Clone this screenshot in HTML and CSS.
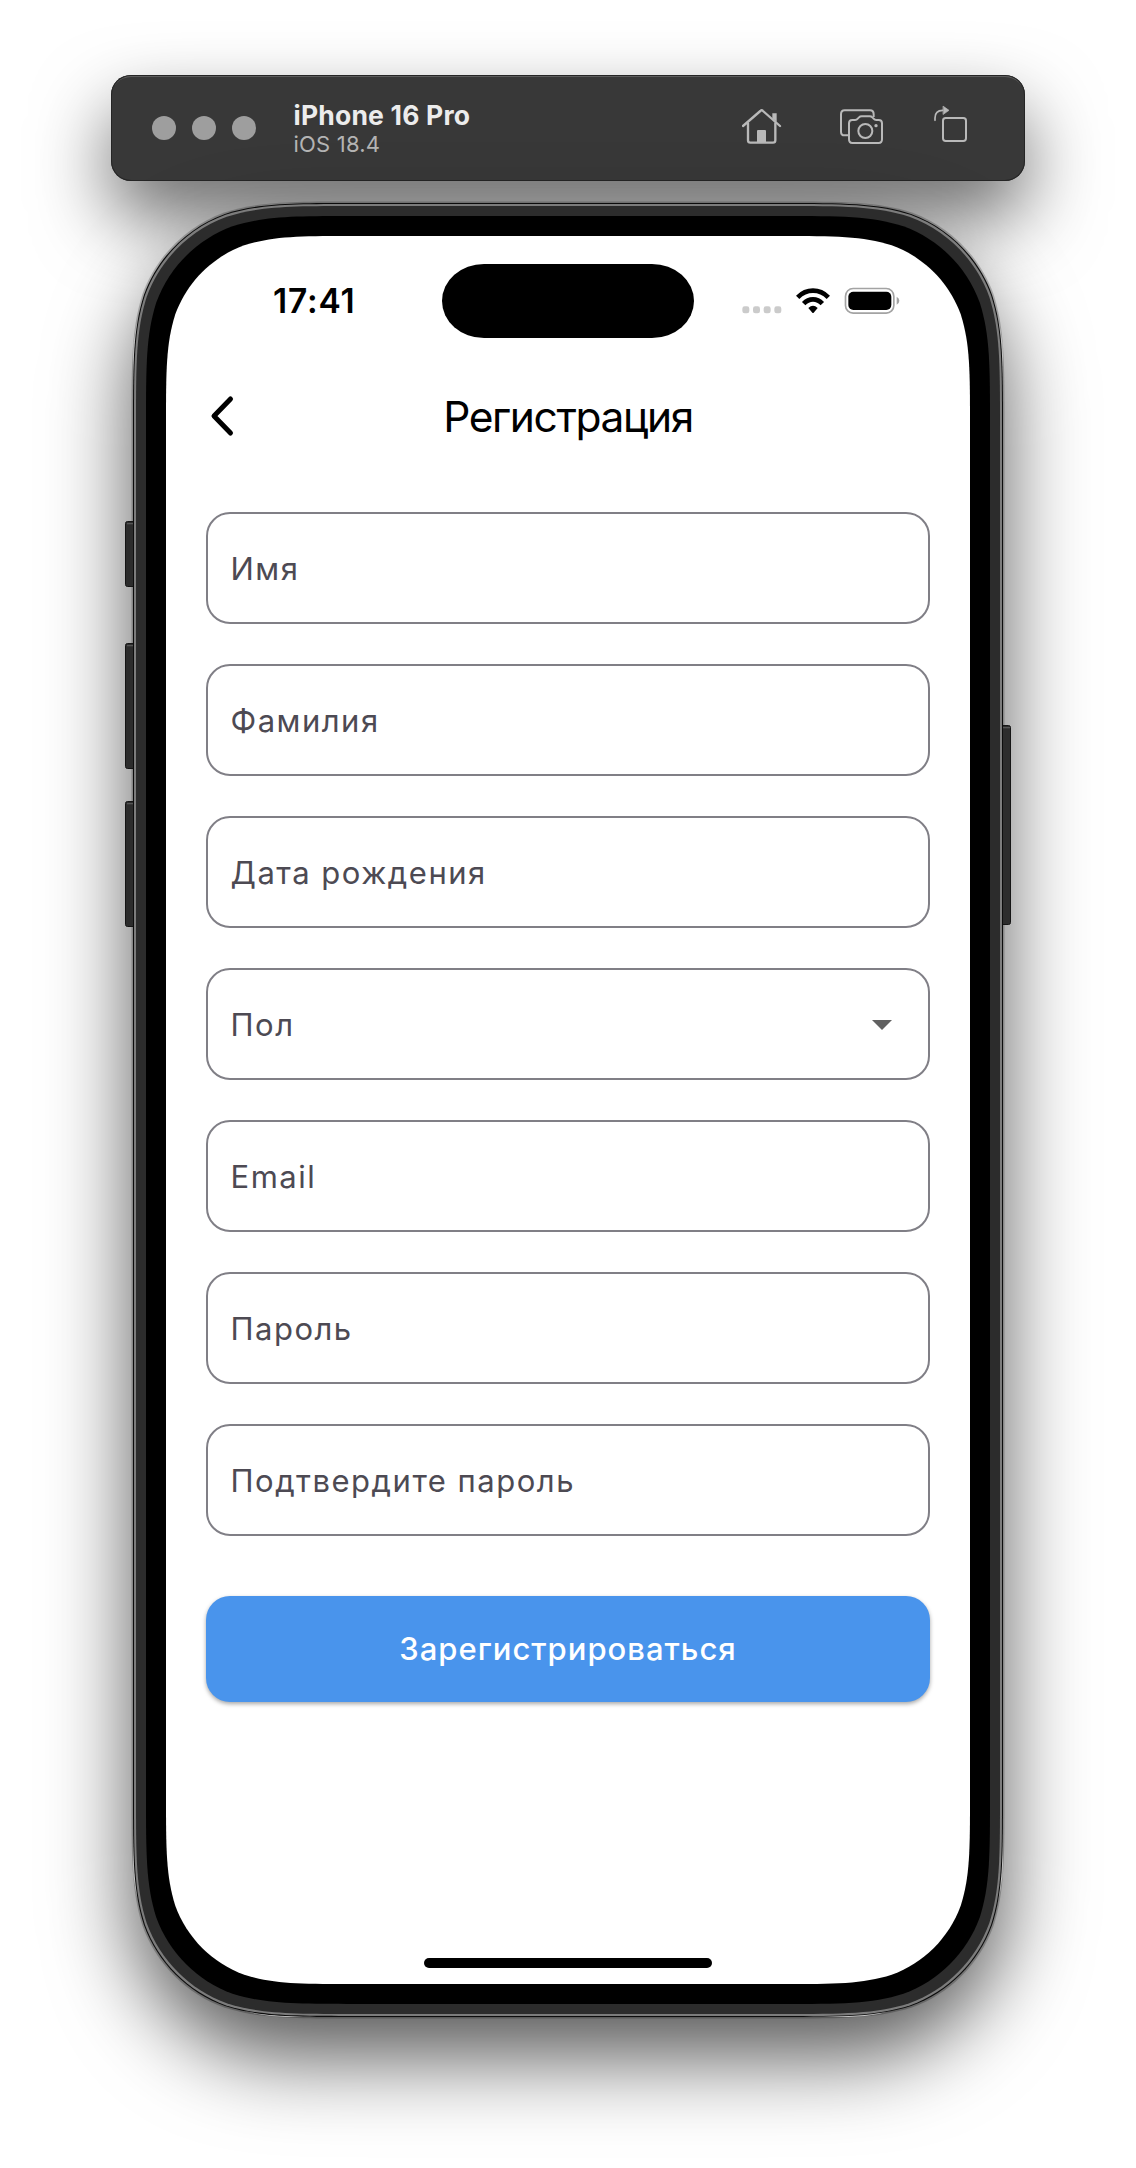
FILE: index.html
```html
<!DOCTYPE html>
<html lang="ru">
<head>
<meta charset="utf-8">
<title>Регистрация</title>
<link rel="stylesheet" href="styles.css">
</head>
<body>
<main class="stage">
  <header class="toolbar">
    <div class="dots"><i></i><i></i><i></i></div>
    <div class="device">
      <span class="device-name">iPhone 16 Pro</span>
      <span class="device-os">iOS 18.4</span>
    </div>
    <div class="tools">
      <svg width="40" height="48" viewBox="126 132 120 144" fill="none" stroke="#b9b9b9" stroke-width="7" stroke-linecap="round" stroke-linejoin="round">
        <path d="M129 198 L181 153 Q185 149 189 153 L240 198"/>
        <path d="M144 190 V241 Q144 248 151 248 H219 Q226 248 226 241 V190"/>
        <path d="M217 160 H230 V186 L217 175 Z" fill="#b9b9b9" stroke="none"/>
        <path d="M171 248 V213 Q171 210 174 210 H195 Q198 210 198 213 V248 Z" fill="#b9b9b9" stroke="none"/>
      </svg>
      <svg width="45" height="48" viewBox="417 132 135 144" fill="none" stroke="#b9b9b9" stroke-width="6" stroke-linejoin="round">
        <path d="M446 226 H434 Q423 226 423 215 V163 Q423 151 434 151 H510 Q521 151 521 163 V171"/>
        <path d="M457 180 H465 Q470 180 474 175 L477 172 Q480 169 485 169 H509 Q514 169 517 172 L520 175 Q524 180 529 180 H536 Q546 180 546 190 V238 Q546 249 536 249 H457 Q447 249 447 238 V190 Q447 180 457 180 Z"/>
        <circle cx="496" cy="213" r="21"/>
        <circle cx="528" cy="197" r="5" fill="#b9b9b9" stroke="none"/>
      </svg>
      <svg width="35" height="48" viewBox="699 132 105 144" fill="none" stroke="#b9b9b9" stroke-width="6" stroke-linecap="round" stroke-linejoin="round">
        <rect x="729" y="174" width="69" height="69" rx="8"/>
        <path d="M705 181 V174 Q705 151 728 151" stroke-width="5"/>
        <path d="M730 139 L747 151 L730 163 Z" fill="#b9b9b9" stroke-width="2"/>
      </svg>
    </div>
  </header>

  <section class="phone">
    <svg class="frame" width="892" height="1836" viewBox="-44 -44 892 1836">
      <path data-offset="34.5" fill="#000" fill-opacity=".22"/>
      <g fill="#2c2c2c" stroke="#151515">
        <rect x="-40.5" y="285.5" width="14" height="65" rx="2"/>
        <rect x="-40.5" y="407.5" width="14" height="125" rx="2"/>
        <rect x="-40.5" y="565.5" width="14" height="125" rx="2"/>
        <rect x="830" y="489.5" width="14.5" height="199" rx="2"/>
      </g>
      <g fill="#565656">
        <rect x="-39" y="287" width="8" height="1.3"/>
        <rect x="-39" y="409" width="8" height="1.3"/>
        <rect x="-39" y="567" width="8" height="1.3"/>
        <rect x="836" y="491" width="8" height="1.3"/>
      </g>
      <path data-offset="33" fill="#0c0c0c"/>
      <path data-offset="32" fill="#7c7c7c"/>
      <path data-offset="30" fill="#2c2c2c"/>
      <path data-offset="20" fill="#000"/>
      <path data-offset="0" fill="#fff"/>
    </svg>

    <div class="screen">
      <div class="status">
        <span class="time">17:41</span>
        <span class="island"></span>
        <svg class="status-icons" width="160" height="30" viewBox="120 285 480 90">
          <g fill="#cbcbcb">
            <rect x="127" y="349" width="21" height="21" rx="7"/>
            <rect x="159" y="349" width="21" height="21" rx="7"/>
            <rect x="191" y="349" width="21" height="21" rx="7"/>
            <rect x="223" y="349" width="21" height="21" rx="7"/>
          </g>
          <g fill="none" stroke="#000" stroke-width="14">
            <path d="M293 322 Q313 302 339 302 Q365 302 385 322"/>
            <path d="M311 341 Q323 328 339 328 Q355 328 367 341"/>
          </g>
          <path d="M325 354 Q339 341 353 354 L341 368 Q339 370 337 368 Z"/>
          <rect x="436.500" y="295.500" width="145" height="74" rx="23" fill="none" stroke="#a3a3a3" stroke-width="5"/>
          <rect x="445" y="305" width="129" height="55" rx="15"/>
          <path d="M590 320 Q598 324 598 332 Q598 340 590 344 Z" fill="#a3a3a3"/>
        </svg>
      </div>

      <div class="appbar">
        <svg class="back" width="26" height="42" viewBox="0 0 26 42" fill="none" stroke="#000" stroke-width="5" stroke-linecap="round" stroke-linejoin="round">
          <path d="M21.500 4 L5 21 L21.500 38"/>
        </svg>
        <h1 class="title">Регистрация</h1>
      </div>

      <form class="form">
        <div class="field"><span>Имя</span></div>
        <div class="field"><span>Фамилия</span></div>
        <div class="field"><span>Дата рождения</span></div>
        <div class="field">
          <span>Пол</span>
          <svg class="caret" width="20" height="10" viewBox="0 0 20 10"><path d="M0 0 H20 L10 10 Z" fill="#616161"/></svg>
        </div>
        <div class="field"><span>Email</span></div>
        <div class="field"><span>Пароль</span></div>
        <div class="field"><span>Подтвердите пароль</span></div>
        <button class="submit" type="button">Зарегистрироваться</button>
      </form>

      <div class="home-indicator"></div>
    </div>
  </section>
</main>
<script src="frame.js"></script>
</body>
</html>
```
FILE: frame.js
```js
// Draws each layer of the phone body as a rectangle with continuous corners,
// grown by its offset from the 804 x 1748 screen.
const SCREEN_W = 804;
const SCREEN_H = 1748;
const REACH = 1.528665;
const CORNER = [
  [0, 1.088493], [0, 0.868407], [0.074911, 0.631494],
  [0.169060, 0.372824], [0.372824, 0.169060], [0.631494, 0.074911],
  [0.868407, 0], [1.088493, 0], [1.528665, 0]
];

function continuousRect(d) {
  const r = (124 * REACH + d) / REACH;
  const x0 = -d, y0 = -d, x1 = SCREEN_W + d, y1 = SCREEN_H + d;
  const curve = (points, map) => {
    const p = points.map(map).map(([x, y]) => x.toFixed(2) + ' ' + y.toFixed(2));
    return 'C' + p.slice(0, 3).join(' ') + 'C' + p.slice(3, 6).join(' ') + 'C' + p.slice(6, 9).join(' ');
  };
  const swap = CORNER;
  const reach = r * REACH;
  return [
    'M' + x0 + ' ' + (y0 + reach),
    curve(swap, ([a, b]) => [x0 + a * r, y0 + b * r]),
    'H' + (x1 - reach),
    curve(swap, ([a, b]) => [x1 - b * r, y0 + a * r]),
    'V' + (y1 - reach),
    curve(swap, ([a, b]) => [x1 - a * r, y1 - b * r]),
    'H' + (x0 + reach),
    curve(swap, ([a, b]) => [x0 + b * r, y1 - a * r]),
    'Z'
  ].join('');
}

document.querySelectorAll('.frame path[data-offset]').forEach((path) => {
  path.setAttribute('d', continuousRect(Number(path.dataset.offset)));
});
```
FILE: styles.css
```css
* { box-sizing: border-box; }

body {
  margin: 0;
  background: #fff;
  font-family: Inter, "Liberation Sans", sans-serif;
}

.stage {
  width: 1136px;
  height: 2168px;
  padding-top: 75px;
  display: flex;
  flex-direction: column;
  align-items: center;
  gap: 22px;
  overflow: hidden;
}

.toolbar {
  width: 914px;
  height: 106px;
  flex: none;
  display: flex;
  align-items: center;
  padding: 0 57px 0 41px;
  border-radius: 20px;
  background: #383838;
  box-shadow:
    inset 0 0 0 1px #252525,
    inset 0 2px 0 0 #5c5c5c,
    0 36px 76px rgba(0, 0, 0, .58);
}

.dots { display: flex; gap: 16px; }
.dots i {
  width: 24px;
  height: 24px;
  border-radius: 50%;
  background: #9e9e9e;
}

.device {
  display: flex;
  flex-direction: column;
  margin: 1px 0 0 37.5px;
  white-space: nowrap;
}
.device-name {
  font-size: 26.5px;
  line-height: 30px;
  font-weight: 700;
  color: #ececec;
  letter-spacing: .2px;
}
.device-os {
  font-size: 22px;
  line-height: 28px;
  color: #b4b4b4;
  letter-spacing: .2px;
}

.tools { display: flex; margin-left: auto; }
.tools svg + svg { margin-left: 57px; }
.tools svg:last-child { margin-left: 49px; }

.phone {
  position: relative;
  width: 870px;
  height: 1814px;
  flex: none;
  padding: 33px;
  border-radius: 155px;
  box-shadow: 0 40px 84px rgba(0, 0, 0, .66);
}
.frame { position: absolute; left: -11px; top: -11px; }

.screen {
  position: relative;
  height: 1748px;
  display: flex;
  flex-direction: column;
}

.status {
  height: 129px;
  flex: none;
  display: grid;
  grid-template-columns: 1fr 252px 1fr;
  align-items: center;
}
.time {
  padding: 1px 0 0 107px;
  font-size: 33.5px;
  line-height: 40px;
  font-weight: 600;
  letter-spacing: .8px;
}
.island {
  height: 74px;
  border-radius: 42px / 37px;
  background: #000;
}
.status-icons { margin: -1px 0 0 46px; }

.appbar {
  height: 103px;
  flex: none;
  display: grid;
  grid-template-columns: 1fr auto 1fr;
  align-items: center;
}
.back { margin-left: 43px; margin-top: -2px; }
.title {
  margin: 0;
  font-size: 42.5px;
  line-height: 56px;
  font-weight: 400;
  color: #000;
  letter-spacing: -1.4px;
}

.form {
  display: flex;
  flex-direction: column;
  gap: 40px;
  padding: 44px 40px 0;
}
.field {
  height: 112px;
  display: flex;
  align-items: center;
  justify-content: space-between;
  padding: 2px 36px 0 22.5px;
  border: 2px solid #807f86;
  border-radius: 24px;
  font-size: 31px;
  line-height: 40px;
  letter-spacing: 1.5px;
  color: #4d4a53;
  white-space: nowrap;
}

.submit {
  height: 106px;
  margin-top: 20px;
  padding: 0;
  border: 0;
  border-radius: 24px;
  background: #4994ec;
  box-shadow: 0 2px 4px rgba(0, 0, 0, .35);
  color: #fff;
  font: 500 31px/40px Inter, "Liberation Sans", sans-serif;
  letter-spacing: 1px;
}

.home-indicator {
  width: 288px;
  height: 10px;
  margin: auto auto 16px;
  border-radius: 5px;
  background: #000;
}
```
